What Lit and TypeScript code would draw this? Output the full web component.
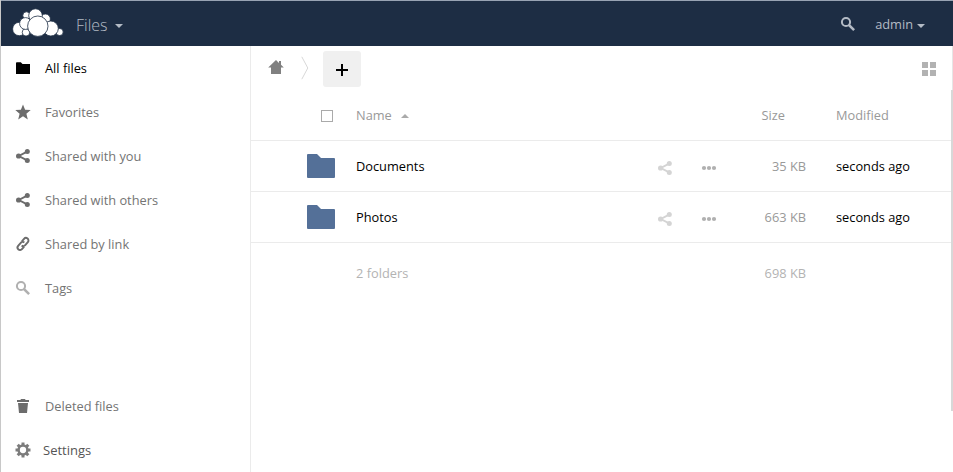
import { LitElement, html, css, svg, nothing } from "lit";
import { customElement, property } from "lit/decorators.js";

const sharePath = svg`<path d="M12.2 3.6 3.8 8l8.4 4.4" fill="none" stroke="currentColor" stroke-width="1.9"/><circle cx="12.3" cy="3.4" r="2.5"/><circle cx="3.6" cy="8" r="2.6"/><circle cx="12.3" cy="12.6" r="2.5"/>`;
const searchPath = svg`<circle cx="6" cy="6" r="4.1" fill="none" stroke="currentColor" stroke-width="2"/><path d="m8.8 8.8 5.3 5.3" stroke="currentColor" stroke-width="2.6"/>`;

const icons: Record<string, unknown> = {
  folder: svg`<path d="M1 3.2q0-1 .8-1h4L7.5 4H15v10H1z"/>`,
  star: svg`<path d="m8 .4 2.1 5.3 5.6.3-4.3 3.7 1.4 5.7L8 12.2l-4.8 3.2 1.4-5.7L.3 6l5.6-.3z"/>`,
  share: sharePath,
  search: searchPath,
  link: svg`<g transform="rotate(-50 8 8)" fill="none" stroke="currentColor" stroke-width="1.9"><path d="M6.8 10.5H3.4a2.5 2.5 0 0 1 0-5h4.1a2.5 2.5 0 0 1 2.5 2.6"/><path d="M9.2 5.5h3.4a2.5 2.5 0 0 1 0 5H8.5a2.5 2.5 0 0 1-2.5-2.6"/></g>`,
  trash: svg`<path d="M6 1h4l.6 1H14v2H2V2h3.4zM3 5h10l-1 10H4z"/>`,
  gear: svg`<circle cx="8" cy="8" r="4.4" fill="none" stroke="currentColor" stroke-width="2.5"/>${[0, 45, 90, 135, 180, 225, 270, 315].map(
    (a) => svg`<path d="M6.5 .5h3v3h-3z" transform=${`rotate(${a} 8 8)`}/>`
  )}`,
  home: svg`<path d="M8 1 .2 8.5H3V15h10V8.500h2.800L13 5.800V2h-2v1.900z"/>`,
  more: svg`<circle cx="3" cy="8" r="2.100"/><circle cx="8" cy="8" r="2.100"/><circle cx="13" cy="8" r="2.100"/>`,
  grid: svg`<path d="M1 1h6v6H1zM9 1h6v6H9zM1 9h6v6H1zM9 9h6v6H9z"/>`,
  plus: svg`<path d="M7 2h2v5h5v2H9v5H7V9H2V7h5z"/>`,
};

@customElement("ui-icon")
class UiIcon extends LitElement {
  @property() name = "";
  static styles = css`
    :host { display: block; flex: none; width: 16px; height: 16px; }
    svg { display: block; width: 100%; height: 100%; fill: currentColor; }
  `;
  render() {
    return html`<svg viewBox="0 0 16 16">${icons[this.name] ?? nothing}</svg>`;
  }
}

@customElement("top-bar")
class TopBar extends LitElement {
  static styles = css`
    :host {
      display: flex; align-items: center; box-sizing: border-box; height: 46px;
      padding: 0 28px 0 11px; border-top: 1px solid #98a3b3;
      background: #1d2d44; color: #b4bbc5;
    }
    .logo { display: block; width: 52px; height: 30px; margin-top: -2px; fill: #fff; stroke: #1d2d44; stroke-width: .8; }
    .app { margin-left: 12px; font-size: 16px; font-weight: 300; line-height: 20px; padding-top: 3px; }
    .caret { border: 4px solid transparent; border-top-color: currentColor; border-bottom: 0; }
    .app-caret { margin: 4px 0 0 7px; }
    .search { margin: 0 19px 0 auto; }
    .user { line-height: 18px; padding-top: 1px; }
    .user-caret { margin: 5px 0 0 4px; }
  `;
  render() {
    return html`
      <svg class="logo" viewBox="12 8 52 30">
        <circle cx="26.5" cy="15.5" r="3.7" />
        <circle cx="45.4" cy="19" r="5" />
        <circle cx="35.5" cy="15.6" r="6.8" />
        <circle cx="19.3" cy="29" r="6.7" />
        <circle cx="26" cy="32.3" r="3.8" />
        <circle cx="25.5" cy="23.5" r="5.9" />
        <circle cx="59.6" cy="32" r="3.6" />
        <circle cx="50.8" cy="28.5" r="7.5" />
        <circle cx="37.8" cy="26.2" r="10.2" />
      </svg>
      <span class="app">Files</span><span class="caret app-caret"></span>
      <ui-icon class="search" name="search"></ui-icon>
      <span class="user">admin</span><span class="caret user-caret"></span>
    `;
  }
}

const navItems = [
  { icon: "folder", label: "All files", tone: "active" },
  { icon: "star", label: "Favorites", tone: "" },
  { icon: "share", label: "Shared with you", tone: "" },
  { icon: "share", label: "Shared with others", tone: "" },
  { icon: "link", label: "Shared by link", tone: "" },
  { icon: "search", label: "Tags", tone: "faint" },
];

@customElement("side-nav")
class SideNav extends LitElement {
  static styles = css`
    :host {
      display: flex; flex-direction: column; box-sizing: border-box;
      width: 250px; border-right: 1px solid #ebebeb; color: #747474;
    }
    .item { display: flex; align-items: center; height: 44px; padding-left: 14px; gap: 14px; }
    .item ui-icon { color: #6c6c6c; }
    .active, .active ui-icon { color: #000; }
    .faint ui-icon { color: #b0b0b0; }
    .bottom { margin-top: auto; }
    .settings { gap: 12px; color: #555; font-size: 13px; }
    .settings ui-icon { color: #7c7c7c; }
  `;
  render() {
    return html`
      ${navItems.map(
        (n) => html`<div class="item ${n.tone}"><ui-icon name=${n.icon}></ui-icon><span>${n.label}</span></div>`
      )}
      <div class="bottom">
        <div class="item"><ui-icon name="trash"></ui-icon><span>Deleted files</span></div>
        <div class="item settings"><ui-icon name="gear"></ui-icon><span>Settings</span></div>
      </div>
    `;
  }
}

const files = [
  { name: "Documents", size: "35 KB", modified: "seconds ago" },
  { name: "Photos", size: "663 KB", modified: "seconds ago" },
];

@customElement("file-list")
class FileList extends LitElement {
  static styles = css`
    :host { display: block; }
    .controls { display: flex; align-items: center; height: 44px; padding: 0 14px 0 17px; }
    .home { color: #808080; margin-top: -3px; }
    .crumb { width: 8px; height: 24px; margin: 0 14px 0 17px; fill: none; stroke: #d8d8d8; }
    .add {
      display: flex; align-items: center; justify-content: center; box-sizing: border-box;
      width: 38px; height: 36px; margin-top: 2px; padding-top: 2px; border-radius: 3px; background: #f0f0f0; color: #000;
    }
    .grid { margin: 2px 0 0 auto; color: #b2b2b2; }
    .row {
      display: grid; grid-template-columns: 105px 295px 44px 60px 51px 30px 1fr;
      align-items: center; height: 50px; border-bottom: 1px solid #ebebeb; color: #000;
    }
    .head { color: #999; }
    .check { width: 10px; height: 10px; margin: 2px 0 0 70px; border: 1px solid #aaa; }
    .sort { display: inline-block; margin-left: 9px; vertical-align: 2px; border: 4px solid transparent; border-bottom-color: #aaa; border-top: 0; }
    .folder { display: block; width: 28px; height: 24px; margin-left: 56px; fill: #547098; }
    .share { margin: 3px 0 0 6px; color: #d4d4d4; }
    .more { margin: 3px 0 0 6px; color: #b0b0b0; }
    .size { grid-column: 5; white-space: nowrap; justify-self: end; color: #999; }
    .head .size { margin-right: 21px; }
    .modified { grid-column: 7; }
    .summary { height: 60px; border: 0; color: #b3b3b3; }
    .summary .size { color: #b3b3b3; }
  `;
  render() {
    return html`
      <div class="controls">
        <ui-icon class="home" name="home"></ui-icon>
        <svg class="crumb" viewBox="0 0 8 24"><path d="m.8 .8 6 11.2-6 11.2" /></svg>
        <div class="add"><ui-icon name="plus"></ui-icon></div>
        <ui-icon class="grid" name="grid"></ui-icon>
      </div>
      <div class="row head">
        <span class="check"></span>
        <span>Name<span class="sort"></span></span>
        <span class="size">Size</span>
        <span class="modified">Modified</span>
      </div>
      ${files.map(
        (f) => html`<div class="row">
          <svg class="folder" viewBox="0 0 28 24"><path d="M0 1q0-1 1-1h9l4 4h13q1 0 1 1v18q0 1-1 1H1q-1 0-1-1z" /></svg>
          <span>${f.name}</span>
          <ui-icon class="share" name="share"></ui-icon>
          <ui-icon class="more" name="more"></ui-icon>
          <span class="size">${f.size}</span>
          <span class="modified">${f.modified}</span>
        </div>`
      )}
      <div class="row summary">
        <span></span>
        <span>${files.length} folders</span>
        <span class="size">698 KB</span>
      </div>
    `;
  }
}

@customElement("app-root")
class AppRoot extends LitElement {
  static styles = css`
    :host {
      display: flex; flex-direction: column; box-sizing: border-box; height: 472px; overflow: hidden;
      border-left: 1px solid #c8c8c8; background: #fff;
      font: 12.8px/18px "Open Sans", sans-serif;
    }
    .body { display: flex; flex: 1; min-height: 0; }
    file-list { flex: 1; }
    .rail { width: 2px; height: 365px; background: linear-gradient(to right, #fff 50%, #e6e6e6 50%); }
    .thumb { height: 321px; margin-top: 44px; background: #d8d8d8; }
    .rail { display: flow-root; }
  `;
  render() {
    return html`
      <top-bar></top-bar>
      <div class="body">
        <side-nav></side-nav>
        <file-list></file-list>
        <div class="rail"><div class="thumb"></div></div>
      </div>
    `;
  }
}
